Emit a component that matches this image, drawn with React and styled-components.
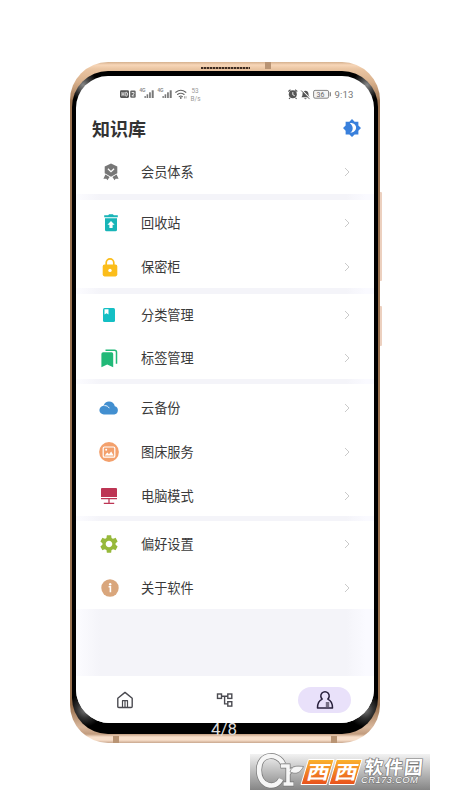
import styled, { createGlobalStyle } from 'styled-components';

const groups = [
  { rowHeight: 45, drop: 0, gap: 6, items: [{ label: '会员体系', icon: <MedalIcon />, shift: 2 }] },
  {
    rowHeight: 44,
    drop: 2,
    gap: 6,
    items: [
      { label: '回收站', icon: <TrashIcon />, shift: 2 },
      { label: '保密柜', icon: <LockIcon />, shift: 1 },
    ],
  },
  {
    rowHeight: 42.5,
    drop: 0,
    gap: 5,
    items: [
      { label: '分类管理', icon: <BookIcon />, shift: 0 },
      { label: '标签管理', icon: <TagsIcon />, shift: 0 },
    ],
  },
  {
    rowHeight: 44,
    drop: 3,
    gap: 5,
    items: [
      { label: '云备份', icon: <CloudIcon />, shift: 0 },
      { label: '图床服务', icon: <PictureIcon />, shift: 0 },
      { label: '电脑模式', icon: <ComputerIcon />, shift: 0 },
    ],
  },
  {
    rowHeight: 44,
    drop: 2,
    gap: 0,
    items: [
      { label: '偏好设置', icon: <GearIcon />, shift: 0 },
      { label: '关于软件', icon: <InfoIcon />, shift: 1 },
    ],
  },
];

export default function App() {
  return (
    <Page>
      <GlobalStyle />
      <Phone>
        <Speaker />
        <Seam $side="top" />
        <Seam $side="bottomLeft" />
        <Seam $side="bottomRight" />
        <SideButton $top={130} $height={89} />
        <SideButton $top={244} $height={40} />
        <Bezel>
          <Screen>
            <StatusBar />
            <Header>
              <Title>知识库</Title>
              <ThemeIcon />
            </Header>
            <Menu>
              {groups.map((group, i) => (
                <Group key={i} $gap={group.gap}>
                  {group.items.map((item) => (
                    <Row key={item.label} $height={group.rowHeight} $drop={group.drop}>
                      <IconSlot $shift={item.shift}>{item.icon}</IconSlot>
                      <Label>{item.label}</Label>
                      <Chevron />
                    </Row>
                  ))}
                </Group>
              ))}
            </Menu>
            <NavBar>
              <NavItem>
                <HomeIcon />
              </NavItem>
              <NavItem>
                <TreeIcon />
              </NavItem>
              <NavItem $active>
                <PersonIcon />
              </NavItem>
            </NavBar>
          </Screen>
        </Bezel>
        <Counter>4/8</Counter>
      </Phone>
      <Watermark />
    </Page>
  );
}

function StatusBar() {
  return (
    <StatusRow>
      <svg width="82" height="16" viewBox="0 0 82 16">
        <rect x="0" y="4.3" width="9" height="7.6" rx="1.3" fill="#555" />
        <path d="M2 6v4.2M4 6v4.2M2 8.1h2M5.8 6.1v4M5.8 6.2h.8q1 .5 1 2t-1 1.9h-.8" stroke="#fff" strokeWidth=".8" fill="none" />
        <rect x="10.2" y="4.5" width="5.5" height="7.2" rx="1.2" fill="#666" />
        <path d="M11.7 6.5h2.2v1.4l-2 2h2.3" stroke="#fff" strokeWidth=".8" fill="none" />
        <g fill="#888" fontFamily="Liberation Sans, sans-serif" fontSize="4.6" fontWeight="700">
          <text x="19.5" y="6.3">4G</text>
          <text x="37.5" y="6.3">4G</text>
        </g>
        <g fill="#777">
          {[24.5, 42.5].map((x) => (
            <g key={x}>
              <rect x={x} y="10" width="1.3" height="2" />
              <rect x={x + 2.1} y="8.3" width="1.6" height="3.7" />
              <rect x={x + 4.6} y="6.3" width="1.7" height="5.7" />
              <rect x={x + 7.2} y="4.3" width="2" height="7.7" />
            </g>
          ))}
        </g>
        <g fill="none" stroke="#666" strokeWidth="1.1" strokeLinecap="round">
          <path d="M55.8 6.3q5-4 10 0M57.5 8.5q3.3-2.6 6.6 0M59.2 10.6q1.6-1.2 3.2 0" />
        </g>
        <circle cx="60.8" cy="12" r=".9" fill="#666" />
        <path d="M64.5 10.2v2.3M66 10.2v2.3" stroke="#888" strokeWidth=".7" />
        <g fill="#999" fontFamily="Roboto, sans-serif" fontSize="6.4">
          <text x="71.5" y="6.8">53</text>
          <text x="70.5" y="14.5" textLength="10">B/s</text>
        </g>
      </svg>
      <svg width="66" height="16" viewBox="0 0 66 16">
        <circle cx="4.8" cy="8.3" r="4" fill="#555" />
        <path d="M.3 5.5 2.5 3.8M9.3 5.5 7.1 3.8M2 12l-1 .9M7.6 12l1 .9" stroke="#555" strokeWidth="1.1" />
        <path d="M4.8 6.1v2.6l1.9 1" stroke="#fff" strokeWidth=".9" fill="none" />
        <path d="M13.4 11.2c1.2-1 1-2.2 1.1-3.4.2-2 1.4-3 3-3s2.8 1 3 3c.1 1.2.1 2.4 1.2 3.4z" fill="#555" />
        <path d="M16.2 12.2h2.5q-.3 1-1.2 1t-1.3-1z" fill="#555" />
        <path d="M13.9 4.1l8.400 8.600" stroke="#fff" strokeWidth="1.2" />
        <path d="M13.2 4.500l8.400 8.600" stroke="#555" strokeWidth=".9" />
        <rect x="25.600" y="4.400" width="15" height="7.800" rx="1.500" fill="#f4f4f4" stroke="#777" strokeWidth=".9" />
        <path d="M42.300 6.300v4" stroke="#777" strokeWidth="1.100" />
        <text x="28.500" y="10.800" fontFamily="Roboto, sans-serif" fontSize="7" fill="#666">
          36
        </text>
        <text x="46.500" y="11.900" fontFamily="Roboto, sans-serif" fontSize="9.600" fill="#777" textLength="19">
          9:13
        </text>
      </svg>
    </StatusRow>
  );
}

function ThemeIcon() {
  return (
    <svg width="18" height="18" viewBox="0 0 24 24">
      <path fill="#3980dc" d="M12 0l3.500 3.500h5v5L24 12l-3.500 3.500v5h-5L12 24l-3.500-3.500h-5v-5L0 12l3.500-3.500v-5h5z" />
      <path fill="#fff" d="M9.200 5.500c10.500-.8 11.500 12.300.3 13 5-3.500 4.300-9.800-.3-13z" />
    </svg>
  );
}

function MedalIcon() {
  return (
    <svg width="18" height="18" viewBox="0 0 18 18">
      <path fill="#777" d="M9 .4l6.300 3v6.800l-6.300 3.500-6.300-3.500V3.400z" />
      <path d="M5.900 5.700l3.100 3 3.100-3" fill="none" stroke="#fff" strokeWidth="1.200" />
      <path fill="#777" d="M3.400 11.400l4.200 2.500-2.200 3.300-1-1.500-3 .1zM14.600 11.400l-4.200 2.500 2.200 3.300 1-1.500 3 .1z" />
    </svg>
  );
}

function TrashIcon() {
  return (
    <svg width="18" height="18" viewBox="0 0 18 18">
      <path fill="#18b5b8" d="M2.200 1.300h4l.9-1h3.800l.9 1h4v1.900H2.200zM3 4.200h12v11.600q0 1.500-1.500 1.500h-9Q3 17.300 3 15.800z" />
      <path fill="#fff" d="M9 7l3.600 3.700h-2v3.200H7.400v-3.200h-2z" />
    </svg>
  );
}

function LockIcon() {
  return (
    <svg width="18" height="19" viewBox="0 0 18 19">
      <path d="M5.200 8V4.700a3.800 3.800 0 0 1 7.600 0V8" fill="none" stroke="#fbbd1b" strokeWidth="1.700" />
      <rect x="1.700" y="6.600" width="14.600" height="11.800" rx="1.800" fill="#fbbd1b" />
      <circle cx="9" cy="12.400" r="1.700" fill="#fff" />
    </svg>
  );
}

function BookIcon() {
  return (
    <svg width="14" height="16" viewBox="0 0 14 16">
      <rect x="1" y="1" width="12" height="14" rx="1.500" fill="#14bfc4" />
      <path fill="#fff" d="M2.500 2.300h4v5.200l-2-1.300-2 1.300z" />
    </svg>
  );
}

function TagsIcon() {
  return (
    <svg width="18" height="20" viewBox="0 0 18 20">
      <path fill="#21b978" d="M3.200 4.300h8.400q1.600 0 1.600 1.600v13.300l-6-2.600-5.800 2.600V5.900q0-1.600 1.800-1.600z" />
      <path d="M5.500 2.200h9q2 0 2 2v11.500" fill="none" stroke="#21b978" strokeWidth="1.500" />
    </svg>
  );
}

function CloudIcon() {
  return (
    <svg width="20" height="14" viewBox="0 0 20 14">
      <path fill="#428fd0" d="M5 13.500a4.400 4.400 0 0 1-.4-8.800C5.500 2 7.500.6 10 .6c3 0 5.300 2 5.800 4.700A4.200 4.200 0 0 1 15.300 13.500z" />
      <path d="M5.300 4.600c2.500-.2 4 1 5 2.600" fill="none" stroke="#fff" strokeWidth=".9" />
    </svg>
  );
}

function PictureIcon() {
  return (
    <svg width="20" height="20" viewBox="0 0 20 20">
      <circle cx="10" cy="10" r="9.900" fill="#f3a06c" />
      <rect x="4.200" y="5" width="11.600" height="10.200" rx="1.300" fill="none" stroke="#fff" strokeWidth="1.200" />
      <circle cx="7.200" cy="7.800" r="1" fill="#fff" />
      <path fill="#fff" d="M5.700 13.500l2.600-3 1.700 1.700 2.200-2.700 2.400 4z" />
    </svg>
  );
}

function ComputerIcon() {
  return (
    <svg width="18" height="18" viewBox="0 0 18 18">
      <path fill="#bd3554" d="M1.900 1h14.200q.9 0 .9.900v8H1V1.900Q1 1 1.900 1z" />
      <path d="M1 11.600h16M9 11.800v4.200M3.800 16.400h10.400" fill="none" stroke="#bd3554" strokeWidth="1.300" />
    </svg>
  );
}

function GearIcon() {
  return (
    <svg width="22" height="22" viewBox="0 0 24 24">
      <path
        fill="#97b93b"
        d="M19.140 12.940c.04-.3.060-.610.060-.940 0-.320-.020-.640-.070-.940l2.030-1.580c.180-.140.230-.410.120-.610l-1.920-3.320c-.120-.220-.370-.290-.590-.220l-2.390.960c-.5-.380-1.030-.7-1.620-.940l-.360-2.540c-.040-.240-.240-.410-.480-.410h-3.840c-.240 0-.430.170-.470.410l-.360 2.540c-.590.240-1.130.570-1.620.940l-2.390-.960c-.220-.080-.470 0-.590.220L2.740 8.870c-.120.210-.080.470.120.610l2.030 1.580c-.050.3-.090.630-.090.940s.020.640.070.940l-2.030 1.580c-.180.140-.230.410-.120.610l1.920 3.320c.120.220.370.290.590.220l2.390-.960c.5.380 1.030.7 1.620.940l.360 2.540c.050.240.240.410.480.410h3.840c.240 0 .440-.170.470-.410l.360-2.540c.590-.240 1.130-.560 1.620-.940l2.390.960c.220.080.470 0 .590-.220l1.920-3.320c.120-.220.070-.470-.120-.610l-2.010-1.580zM12 15.600c-1.980 0-3.600-1.620-3.600-3.600s1.620-3.600 3.600-3.600 3.600 1.620 3.600 3.600-1.620 3.600-3.600 3.600z"
      />
    </svg>
  );
}

function InfoIcon() {
  return (
    <svg width="18" height="18" viewBox="0 0 18 18">
      <circle cx="9" cy="9" r="8.700" fill="#d9a67c" />
      <circle cx="9.200" cy="5.200" r="1.200" fill="#fff" />
      <path d="M7.600 7.800h1.800v5.500" fill="none" stroke="#fff" strokeWidth="1.600" />
    </svg>
  );
}

function Chevron() {
  return (
    <svg width="6" height="10" viewBox="0 0 6 10">
      <path d="M1 1l4 4-4 4" fill="none" stroke="#c4c4c4" strokeWidth=".9" />
    </svg>
  );
}

function HomeIcon() {
  return (
    <svg width="18" height="18" viewBox="0 0 18 18" fill="none" stroke="#4a4a50" strokeWidth="1.400" strokeLinejoin="round">
      <path d="M1.800 7.200L9 1.400l7.200 5.800v8.200q0 1.100-1.100 1.100H2.900q-1.100 0-1.100-1.100z" />
      <path d="M6.500 16.500V9.700h5v6.800M9 9.700v6.800" strokeWidth="1.200" />
    </svg>
  );
}

function TreeIcon() {
  return (
    <svg width="18" height="16" viewBox="0 0 18 16" fill="none" stroke="#4a4a50" strokeWidth="1.400">
      <rect x="1.500" y="2" width="4" height="4.400" />
      <rect x="11.800" y="2" width="4" height="4.400" />
      <rect x="11.800" y="9.700" width="4" height="4.400" />
      <path d="M5.500 4.200h6.300M8.600 4.200v7.700h3.200" />
    </svg>
  );
}

function PersonIcon() {
  return (
    <svg width="18" height="20" viewBox="0 0 18 20" fill="none" stroke="#28203c" strokeWidth="1.500" strokeLinejoin="round">
      <path d="M6.200 9.100A4.200 4.200 0 1 1 11.800 9.100C15 10.400 16.500 13 16.500 17.900H1.500C1.500 13 3 10.400 6.200 9.100z" />
      <rect x="9.800" y="12" width="3.400" height="5" fill="#777085" stroke="none" />
    </svg>
  );
}

function Watermark() {
  return (
    <WatermarkBox>
      <svg width="180" height="36" viewBox="0 0 180 36" overflow="visible">
        <defs>
          <linearGradient id="orange" x1="0" y1="0" x2="0" y2="1">
            <stop offset="0" stopColor="#fbb32c" />
            <stop offset="1" stopColor="#e8501c" />
          </linearGradient>
        </defs>
        {/* leaf mark */}
        <g fill="none">
          <path d="M33 10C29-1 9-2 9 16c0 17 17 20 22 9" stroke="#777" strokeWidth="6" />
          <path d="M33 10C29-1 9-2 9 16c0 17 17 20 22 9" stroke="#f6f6f6" strokeWidth="4.600" />
          <path d="M30.500 12h7.500v18M33 30h11M38 20q3-5 7-5" stroke="#777" strokeWidth="5" />
          <path d="M31 12h7v18M33.500 30h10M38 20q3-5 7-5" stroke="#f6f6f6" strokeWidth="3.600" />
        </g>
        <path d="M40 18c2-7 7-6 13.500-5.500-3 6-7 8-12 6z" fill="#f6f6f6" stroke="#777" strokeWidth=".7" />
        <g fill="url(#orange)" stroke="#fff" strokeWidth="1">
          <path d="M58.500 5.500H84L76.500 30.500H51z" />
          <path d="M86.500 5.500h25.500l-7.500 25H79z" />
        </g>
        <g fontFamily="Noto Sans CJK SC, sans-serif" fontWeight="700" fill="#fff">
          <text fontSize="19" transform="translate(55.500 25) skewX(-14) scale(1.200 1)">
            西
          </text>
          <text fontSize="19" transform="translate(83.500 25) skewX(-14) scale(1.200 1)">
            西
          </text>
          <text
            fontSize="18.500"
            stroke="#777"
            strokeWidth="1.400"
            paintOrder="stroke"
            textLength="58"
            transform="translate(114 19.500) skewX(-6)"
          >
            软件园
          </text>
        </g>
        <text
          x="111"
          y="29"
          fontFamily="Liberation Sans, sans-serif"
          fontSize="9.500"
          fontStyle="italic"
          fill="#fff"
          stroke="#777"
          strokeWidth="1.200"
          paintOrder="stroke"
          textLength="57"
        >
          CR173.COM
        </text>
      </svg>
    </WatermarkBox>
  );
}

// css styles
const GlobalStyle = createGlobalStyle`
  * {
    box-sizing: border-box;
  }

  body {
    margin: 0;
    background: #fff;
    font-family: 'Noto Sans CJK SC', sans-serif;
  }

  svg {
    display: block;
    flex: none;
  }
`;

const Page = styled.main`
  width: 450px;
  height: 800px;
  padding-top: 62px;
`;

const Phone = styled.div`
  position: relative;
  width: 310px;
  height: 681px;
  margin: 0 auto;
  padding: 9px 2px;
  border-radius: 38px;
  background: linear-gradient(
    #d5b08d 0,
    #f7d6b8 3px,
    #eac5a2 7px,
    #d9b18d 20px,
    #99714f 40px,
    #99714f 645px,
    #d9b79c 665px,
    #c29c7e 672px,
    #f8dfca 675px,
    #f8dfca 678px,
    #c9a78e 681px
  );
`;

const Bezel = styled.div`
  height: 663px;
  padding: 5px 4px 11px;
  border-radius: 36px;
  background:
    radial-gradient(circle at 11px 14px, #888 0, #444 7px, transparent 15px),
    radial-gradient(circle at 295px 14px, #888 0, #444 7px, transparent 15px),
    radial-gradient(circle at 13px 639px, #777 0, #333 8px, transparent 17px),
    radial-gradient(circle at 293px 639px, #777 0, #333 8px, transparent 17px),
    #000;
`;

const Screen = styled.div`
  display: flex;
  flex-direction: column;
  height: 647px;
  border-radius: 32px 32px 34px 34px;
  background: #fff;
  overflow: hidden;
`;

const StatusRow = styled.div`
  display: flex;
  justify-content: space-between;
  padding: 10px 20px 0 44px;
`;

const Header = styled.header`
  display: flex;
  align-items: center;
  justify-content: space-between;
  height: 47px;
  padding: 5px 13px 0 16px;
`;

const Title = styled.h1`
  margin: -1px 0 0;
  font-size: 18px;
  line-height: 26px;
  font-weight: 700;
  color: #333;
`;

const Menu = styled.div`
  flex: 1;
  background: linear-gradient(90deg, #fcfcff 0, #f4f4f9 24px, #f4f4f9 270px, #fafaff 290px);
`;

const Group = styled.section`
  margin-bottom: ${({ $gap }) => $gap}px;
  background: #fff;
`;

const Row = styled.div`
  display: flex;
  align-items: center;
  height: ${({ $height }) => $height}px;
  padding: ${({ $drop }) => $drop}px 24px 0 18px;
`;

const IconSlot = styled.div`
  display: flex;
  justify-content: center;
  width: 30px;
  margin-right: 17px;
  padding-left: ${({ $shift }) => $shift * 2}px;
`;

const Label = styled.span`
  flex: 1;
  font-size: 13.2px;
  line-height: 20px;
  color: #3a3a3a;
`;

const NavBar = styled.nav`
  display: flex;
  align-items: center;
  justify-content: space-between;
  height: 47px;
  padding: 1px 23px 0 22px;
  background: #fff;
`;

const NavItem = styled.div`
  display: flex;
  align-items: center;
  justify-content: center;
  width: 53px;
  height: 26px;
  border-radius: 13px;
  background: ${({ $active }) => ($active ? '#e9e1fa' : 'transparent')};
`;

// sits over the bottom edge of the phone
const Counter = styled.div`
  position: absolute;
  left: 0;
  right: 0;
  bottom: 4px;
  padding-right: 2px;
  font-family: Roboto, sans-serif;
  font-size: 17px;
  line-height: 20px;
  text-align: center;
  color: #ddd;
`;

const Speaker = styled.div`
  position: absolute;
  top: 5px;
  left: 131px;
  width: 49px;
  height: 2px;
  background: repeating-linear-gradient(90deg, #3b2a20 0 2px, #a88a70 2px 3px);
`;

const seams = {
  top: 'top: 0; left: 195px;',
  bottomLeft: 'bottom: 0; left: 43px;',
  bottomRight: 'bottom: 0; left: 261px;',
};

const Seam = styled.div`
  position: absolute;
  width: 6px;
  height: 7px;
  background: #b99474;
  ${({ $side }) => seams[$side]}
`;

const SideButton = styled.div`
  position: absolute;
  top: ${({ $top }) => $top}px;
  right: -2px;
  width: 2px;
  height: ${({ $height }) => $height}px;
  border-radius: 0 1px 1px 0;
  background: #ecd0bf;
`;

const WatermarkBox = styled.div`
  width: 180px;
  height: 36px;
  margin: 11px 0 0 250px;
  background: linear-gradient(#f2f2f2, #858585);
`;
